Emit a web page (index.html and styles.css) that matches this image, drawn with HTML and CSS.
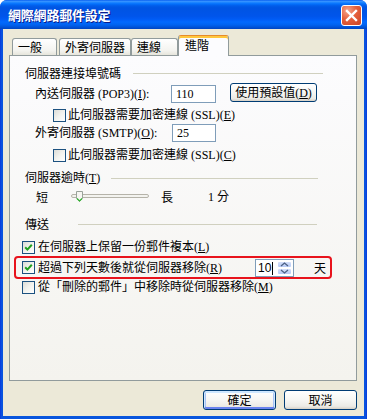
FILE: index.html
```html
<!DOCTYPE html>
<html>
<head>
<meta charset="utf-8">
<link rel="stylesheet" href="styles.css">
</head>
<body>
<div class="window">
  <div class="titlebar">
    <span class="title">網際網路郵件設定</span>
    <span class="close"><svg width="13" height="13" viewBox="0 0 13 13"><path d="M2 2 L11 11 M11 2 L2 11" stroke="#fff" stroke-width="2.4" stroke-linecap="square"/></svg></span>
  </div>
  <div class="client">
    <div class="tabs">
      <div class="tab t1">一般</div>
      <div class="tab t2">外寄伺服器</div>
      <div class="tab t3">連線</div>
      <div class="tab active">進階</div>
    </div>
    <div class="panel">
      <div class="row group r1"><span class="glabel w1">伺服器連接埠號碼</span><i class="line ln1"></i></div>
      <div class="row field r2"><span class="flabel fl1">內送伺服器 (POP3)(<u>I</u>):</span><span class="input">110</span><span class="btn btn-def">使用預設值(<u>D</u>)</span></div>
      <div class="row sub r3"><span class="cb"></span><span class="ctext">此伺服器需要加密連線 (SSL)(<u>E</u>)</span></div>
      <div class="row field r4"><span class="flabel fl2">外寄伺服器 (SMTP)(<u>O</u>):</span><span class="input input2">25</span></div>
      <div class="row sub r5"><span class="cb"></span><span class="ctext">此伺服器需要加密連線 (SSL)(<u>C</u>)</span></div>
      <div class="row group r6"><span class="glabel w2">伺服器逾時(<u>T</u>)</span><i class="line ln2"></i></div>
      <div class="row slider-row r7">
        <span class="short">短</span>
        <span class="slider"><svg width="78" height="14" viewBox="0 0 78 14"><rect x="0.5" y="5.5" width="77" height="3" rx="1.5" fill="#F3F3EF" stroke="#B5B3A9"/><path d="M5.5 2.5 H11.5 V9.5 L8.5 12.5 L5.5 9.5 Z" fill="#F6F6F2" stroke="#9AA29A"/><path d="M6 9.5 L8.5 12 L11 9.5" fill="none" stroke="#32B532" stroke-width="1.2"/></svg></span>
        <span class="long">長</span>
        <span class="minute">1 分</span>
      </div>
      <div class="row group r8"><span class="glabel w3">傳送</span><i class="line ln3"></i></div>
      <div class="row main r9"><span class="cb"><svg width="11" height="11" viewBox="0 0 11 11"><path d="M2.2 5.2 L4.4 7.6 L8.8 2.8" fill="none" stroke="#21A121" stroke-width="2"/></svg></span><span class="ctext">在伺服器上保留一份郵件複本(<u>L</u>)</span></div>
      <div class="redbox">
        <span class="cb"><svg width="11" height="11" viewBox="0 0 11 11"><path d="M2.2 5.2 L4.4 7.6 L8.8 2.8" fill="none" stroke="#21A121" stroke-width="2"/></svg></span>
        <span class="ctext days-label">超過下列天數後就從伺服器移除(<u>R</u>)</span>
        <span class="spin"><span class="spin-val">10<i class="caret"></i></span><span class="spin-btns"><span class="sb"><svg width="9" height="5" viewBox="0 0 9 5"><path d="M1 4 L4.5 1 L8 4" fill="none" stroke="#4D6185" stroke-width="1.3"/></svg></span><span class="sb"><svg width="9" height="5" viewBox="0 0 9 5"><path d="M1 1 L4.5 4 L8 1" fill="none" stroke="#4D6185" stroke-width="1.3"/></svg></span></span></span>
        <span class="day">天</span>
      </div>
      <div class="row main r11"><span class="cb"></span><span class="ctext">從「刪除的郵件」中移除時從伺服器移除(<u>M</u>)</span></div>
    </div>
    <div class="btnrow">
      <span class="btn dlg default">確定</span>
      <span class="btn dlg">取消</span>
    </div>
  </div>
</div>
</body>
</html>
```

FILE: styles.css
```css
* { box-sizing: border-box; }
body {
  margin: 0;
  background: #fff;
  font-family: "Liberation Serif", "Noto Sans CJK TC", serif;
  font-size: 12px;
  line-height: 14px;
  color: #000;
}
u { text-decoration: underline; text-underline-offset: 1px; }
.window {
  width: 367px;
  height: 419px;
  display: flex;
  flex-direction: column;
  background: linear-gradient(to right, #0831D9 0, #0A4EE0 1px, #0855DD 3px, #0855DD 364px, #0A4EE0 366px, #0831D9 367px);
  border-radius: 7px 7px 0 0;
  overflow: hidden;
}
.titlebar {
  height: 29px;
  flex: none;
  display: flex;
  align-items: center;
  justify-content: space-between;
  padding: 0 5px 0 8px;
  background: linear-gradient(to bottom, #0058EE 0%, #3A93FF 4%, #288EFF 7%, #127DFF 10%, #036FFC 14%, #0262EE 18%, #0057E5 24%, #0054E3 30%, #0055EB 56%, #005BF5 66%, #026AFE 76%, #0062EF 86%, #0052D6 94%, #0045C0 100%);
}
.title {
  color: #fff;
  font-family: "Noto Sans CJK TC", sans-serif;
  font-weight: 700;
  font-size: 13px;
  letter-spacing: -0.2px;
  text-shadow: 1px 1px 0 #0A1C8A;
  margin-top: 1px;
}
.close {
  width: 21px;
  height: 21px;
  margin-top: 2px;
  border: 1px solid #fff;
  border-radius: 3px;
  background: radial-gradient(circle at 30% 25%, #F5A58C 0, #E5603C 45%, #CC4425 100%);
  display: flex;
  align-items: center;
  justify-content: center;
}
.client {
  flex: 1;
  margin: 0 3px 3px;
  background: #ECE9D8;
  display: flex;
  flex-direction: column;
}
.tabs {
  display: flex;
  align-items: flex-end;
  height: 21px;
  margin-top: 6px;
  margin-bottom: -1px;
  padding-left: 9px;
  position: relative;
  z-index: 1;
}
.tab {
  height: 17px;
  margin-bottom: 1px;
  border: 1px solid #919B9C;
  border-bottom: none;
  border-radius: 3px 3px 0 0;
  background: linear-gradient(#FFFFFF, #F4F4F0 70%, #E6E5DC);
  display: flex;
  align-items: center;
  padding-left: 5px;
  font-family: "Noto Sans CJK TC", sans-serif;
  font-size: 12px;
}
.t1 { width: 45px; margin-right: 2px; }
.t2 { width: 72px; }
.t3 { width: 47px; }
.active {
  width: 51px;
  height: 21px;
  margin-bottom: 0;
  padding-left: 6px;
  padding-bottom: 3px;
  background: #FCFCFE;
  border-top-color: #E68B2C;
  box-shadow: inset 0 2px 0 #FFC73C;
}
.panel {
  height: 326px;
  margin: 0 7px 0 6px;
  border: 1px solid #919B9C;
  background: linear-gradient(#FCFCFE, #F4F3EE);
  padding-top: 8px;
}
.row {
  display: flex;
  align-items: center;
  height: 18px;
}
.glabel { font-family: "Noto Sans CJK TC", "Liberation Serif", sans-serif; flex: none; }
.group .glabel u, .ctext, .flabel { font-family: "Liberation Serif", "Noto Sans CJK TC", serif; }
.group { padding-left: 15px; }
.w1 { width: 108px; }
.w2 { width: 86px; font-family: "Liberation Serif", "Noto Sans CJK TC", serif; }
.w3 { width: 53px; }
.line { height: 1px; background: #D0D0BF; flex: none; }
.ln1 { width: 190px; }
.ln2 { width: 207px; }
.ln3 { width: 239px; }
.field { padding-left: 25px; }
.flabel { flex: none; white-space: nowrap; }
.fl1 { width: 136px; }
.fl2 { width: 137px; }
.input {
  width: 45px;
  height: 18px;
  border: 1px solid #7F9DB9;
  background: #fff;
  padding-left: 4px;
  display: flex;
  align-items: center;
}
.input2 { width: 44px; }
.btn {
  border: 1px solid #003C74;
  border-radius: 3px;
  background: linear-gradient(#FFFFFF 0, #F6F6F3 50%, #EBEAE5 85%, #D6D0C5 100%);
  display: flex;
  align-items: center;
  justify-content: center;
  font-family: "Liberation Serif", "Noto Sans CJK TC", serif;
  flex: none;
}
.btn-def {
  width: 87px;
  height: 19px;
  margin-left: 14px;
  align-self: flex-start;
  margin-top: -2px;
}
.r2 { margin-top: 3px; }
.r3 { margin-top: 3px; }
.r4 { margin-top: 0; }
.r5 { margin-top: 4px; }
.r6 { margin-top: 5px; }
.r7 { margin-top: 1px; }
.r8 { margin-top: 9px; }
.r9 { margin-top: 5px; }
.r11 { height: 16px; }
.sub { padding-left: 43px; }
.main { padding-left: 12px; }
.cb {
  width: 13px;
  height: 13px;
  flex: none;
  border: 1px solid #1C5180;
  background: linear-gradient(135deg, #DCDCD7 0, #F2F2EE 50%, #FFFFFF 100%);
  display: flex;
  align-items: center;
  justify-content: center;
}
.ctext { margin-left: 3px; white-space: nowrap; }
.sub .ctext { margin-left: 2px; }
.slider-row { padding-left: 26px; font-family: "Noto Sans CJK TC", sans-serif; }
.short { width: 35px; flex: none; }
.slider { width: 78px; height: 14px; flex: none; display: flex; margin-top: -3px; }
.long { margin-left: 12px; width: 12px; flex: none; }
.minute { margin-left: 35px; font-family: "Liberation Serif", "Noto Sans CJK TC", serif; }
.redbox {
  margin-left: 4px;
  width: 318px;
  height: 23px;
  border: 2px solid #E8131C;
  border-radius: 4px;
  display: flex;
  align-items: center;
  padding-left: 6px;
}
.days-label { width: 217px; flex: none; margin-left: 3px; }
.spin {
  width: 39px;
  height: 18px;
  flex: none;
  border: 1px solid #7F9DB9;
  background: #fff;
  display: flex;
  margin-top: 1px;
}
.spin-val {
  flex: 1;
  display: flex;
  align-items: center;
  padding-left: 2px;
  font-family: "Liberation Sans", sans-serif;
}
.caret { width: 1px; height: 13px; background: #000; margin-left: 1px; }
.spin-btns {
  width: 16px;
  display: flex;
  flex-direction: column;
  padding: 1px 1px 1px 0;
  gap: 0;
}
.sb {
  flex: 1;
  background: linear-gradient(#D4E0FB, #B6C9F5);
  border: 1px solid #fff;
  border-radius: 2px;
  display: flex;
  align-items: center;
  justify-content: center;
}
.day { margin-left: 20px; font-family: "Noto Sans CJK TC", sans-serif; }
.btnrow {
  display: flex;
  justify-content: flex-end;
  gap: 8px;
  margin-top: 9px;
  padding-right: 7px;
}
.dlg { width: 73px; height: 20px; font-family: "Noto Sans CJK TC", sans-serif; }
.default {
  box-shadow: inset 0 1px 0 1px #CEE7FF, inset 0 -1px 0 1px #6982EE, inset 0 0 0 2px #A9C3F3;
}
```
